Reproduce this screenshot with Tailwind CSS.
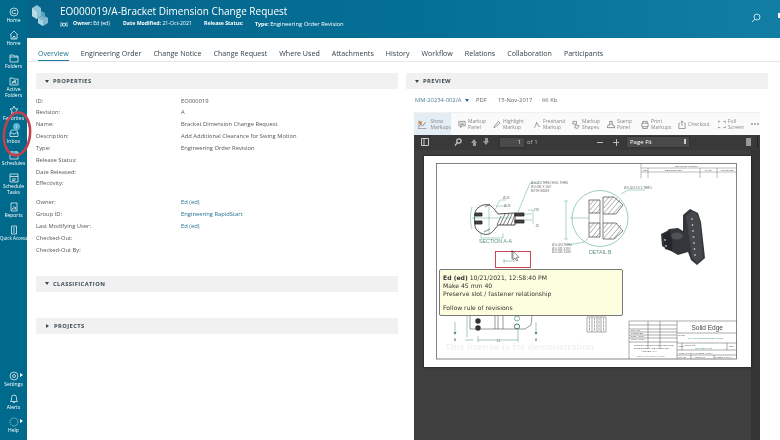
<!DOCTYPE html>
<html><head><meta charset="utf-8"><script src="https://cdn.jsdelivr.net/npm/@tailwindcss/browser@4"></script></head>
<body class="m-0">
<div class="relative w-[780px] h-[440px] overflow-hidden flex bg-white font-['Open_Sans',sans-serif] blur-[0.45px]">
<!-- sidebar -->
<aside class="w-[27px] shrink-0 bg-[#006a8c] text-white text-[5px] font-medium leading-[6px] flex flex-col justify-between text-center">
 <div class="flex flex-col pt-[7px]">
  <div class="h-[23px] flex flex-col items-center"><svg class="w-[10px] h-[10px]" viewBox="0 0 10 10" fill="none" stroke="#fff" stroke-width=".7"><circle cx="5" cy="5" r="4"/><path d="M7 3.500H4.500A1.500 1.500 0 0 0 4.500 6.500H7"/></svg><span>Home</span></div>
  <div class="h-[23px] flex flex-col items-center"><svg class="w-[10px] h-[10px]" viewBox="0 0 10 10" fill="none" stroke="#fff" stroke-width=".7"><path d="M1 5 5 1l4 4M2 4.500V9h6V4.500M4 9V6.500h2V9"/></svg><span>Home</span></div>
  <div class="h-[23px] flex flex-col items-center"><svg class="w-[10px] h-[10px]" viewBox="0 0 10 10" fill="none" stroke="#fff" stroke-width=".7"><path d="M1 2h3l1 1h4v6H1zM1 4h8"/></svg><span>Folders</span></div>
  <div class="h-[29px] flex flex-col items-center"><svg class="w-[10px] h-[10px]" viewBox="0 0 10 10" fill="none" stroke="#fff" stroke-width=".7"><path d="M1 2h3l1 1h4v6H1zM3 8l1-3 1 2 1-3 1 4"/></svg><span>Active<br>Folders</span></div>
  <div class="h-[23px] flex flex-col items-center"><svg class="w-[10px] h-[10px]" viewBox="0 0 10 10" fill="none" stroke="#fff" stroke-width=".7"><path d="m5 1 1.200 2.700 2.800.3-2.100 1.900.6 2.900L5 7.400 2.500 8.800l.6-2.900L1 4l2.800-.3z"/></svg><span>Favorites</span></div>
  <div class="relative h-[22px] flex flex-col items-center"><svg class="w-[10px] h-[10px]" viewBox="0 0 10 10" fill="none" stroke="#fff" stroke-width=".7"><path d="M1 5 2.500 2h5L9 5v3.500H1zM1 5h2.500l.5 1h2l.5-1H9"/></svg><span>Inbox</span><span class="absolute left-[13px] top-[-5px] w-[7px] h-[7px] rounded-full bg-[#5ab4d4] text-[4px] leading-[7px]">1</span></div>
  <div class="h-[23px] flex flex-col items-center"><svg class="w-[10px] h-[10px]" viewBox="0 0 10 10" fill="none" stroke="#fff" stroke-width=".7"><path d="M1 2h8v7H1zM1 4h8M3 1v2M7 1v2"/></svg><span>Schedules</span></div>
  <div class="h-[29px] flex flex-col items-center"><svg class="w-[10px] h-[10px]" viewBox="0 0 10 10" fill="none" stroke="#fff" stroke-width=".7"><path d="M1 1h8v8H1zM1 3.500h8M3 6h4M3 7.500h3"/></svg><span>Schedule<br>Tasks</span></div>
  <div class="h-[23px] flex flex-col items-center"><svg class="w-[10px] h-[10px]" viewBox="0 0 10 10" fill="none" stroke="#fff" stroke-width=".7"><path d="M2 1h6v8H2zM3.500 7.500V6M5 7.500V4M6.500 7.500V5"/></svg><span>Reports</span></div>
  <div class="h-[23px] flex flex-col items-center"><svg class="w-[10px] h-[10px]" viewBox="0 0 10 10" fill="none" stroke="#fff" stroke-width=".7"><path d="M2.500 1h5v8h-5zM4 3h2M4 5h2M4 7h2"/></svg><span class="text-[4.500px] whitespace-nowrap">Quick Access</span></div>
 </div>
 <div class="flex flex-col pb-[3px]">
  <div class="relative h-[23px] flex flex-col items-center"><svg class="w-[10px] h-[10px]" viewBox="0 0 10 10" fill="none" stroke="#fff" stroke-width=".7"><circle cx="5" cy="5" r="4"/><circle cx="5" cy="5" r="1.500"/></svg><span>Settings</span><span class="absolute left-[20px] top-[2px] border-l-[3px] border-l-white border-y-[2.500px] border-y-transparent"></span></div>
  <div class="h-[23px] flex flex-col items-center"><svg class="w-[10px] h-[10px]" viewBox="0 0 10 10" fill="none" stroke="#fff" stroke-width=".7"><path d="M1.500 7.500h7L7.500 6V3.500a2.500 2.500 0 0 0-5 0V6zM4 8.500h2"/></svg><span>Alerts</span></div>
  <div class="relative h-[20px] flex flex-col items-center"><svg class="w-[10px] h-[10px]" viewBox="0 0 10 10" fill="none" stroke="#cfe3ea" stroke-width=".7" stroke-dasharray="1.500 .7"><circle cx="5" cy="5" r="4"/></svg><span>Help</span><span class="absolute left-[20px] top-[2px] border-l-[3px] border-l-white border-y-[2.500px] border-y-transparent"></span></div>
 </div>
</aside>
<div class="flex-1 flex flex-col min-w-0">
 <!-- header -->
 <header class="relative h-[38px] shrink-0 flex bg-gradient-to-r from-[#06648a] via-[#046f96] to-[#127ea4] text-white">
  <svg class="w-[18px] h-[22px] ml-[4px] mt-[4px]" viewBox="0 0 18 22"><path d="M1 4 6 1l4 3v8l-4 3-5-3z" fill="#8fc4d6"/><path d="M6 8v7l-5-3V4z" fill="#b9dbe6"/><path d="M7 14l5-3 5 3v5l-5 3-5-3z" fill="#7db8cc"/><path d="M7 14l5 3v5l-5-3z" fill="#a8d2e0"/><path d="M10 7l4 2v5l-4-2z" fill="#5ba2bb"/></svg>
  <div class="ml-[11px] flex flex-col">
   <div class="text-[10px] leading-[12px] mt-[5px] whitespace-nowrap">EO000019/A-Bracket Dimension Change Request</div>
   <div class="flex items-center text-[5.200px] font-bold h-[8px] mt-[3px] whitespace-nowrap">
    <svg class="w-[8px] h-[7px] mr-[5px]" viewBox="0 0 8 7" fill="none" stroke="#d6edf5" stroke-width=".8"><circle cx="4" cy="3.500" r="1.500"/><path d="M1 1v5M7 1v5M2.500 2v3M5.500 2v3"/></svg>
    <span class="w-[50px]">Owner: <span class="font-normal">Ed (ed)</span></span><span class="w-[81px]">Date Modified: <span class="font-normal">21-Oct-2021</span></span><span class="w-[51px]">Release Status:</span><span>Type: <span class="font-normal text-[5.800px]">Engineering Order Revision</span></span>
   </div>
  </div>
  <svg class="absolute left-[724px] top-[13px] w-[10px] h-[10px]" viewBox="0 0 10 10" fill="none" stroke="#d9eef5" stroke-width=".9"><circle cx="6" cy="4" r="3"/><path d="M3.800 6.200 1 9"/></svg>
  <span class="absolute left-[751px] top-[13px] w-[2px] h-[5px] bg-white"></span>
 </header>
 <!-- tabs -->
 <nav class="h-[24px] shrink-0 border-b border-[#e8e8e8] pl-[11px] flex gap-[12px] text-[7.100px] leading-[10px] text-[#2f3f48] whitespace-nowrap bg-white">
  <span class="text-[#1c6f8f] border-b border-[#1c7f9f] h-[23px] pt-[10px]">Overview</span>
  <span class="pt-[10px]">Engineering Order</span><span class="pt-[10px]">Change Notice</span><span class="pt-[10px]">Change Request</span><span class="pt-[10px]">Where Used</span><span class="pt-[10px]">Attachments</span><span class="pt-[10px]">History</span><span class="pt-[10px]">Workflow</span><span class="pt-[10px]">Relations</span><span class="pt-[10px]">Collaboration</span><span class="pt-[10px]">Participants</span>
 </nav>
 <main class="flex-1 flex min-h-0 pl-[9px] pt-[11px]">
  <!-- left -->
  <section class="w-[362px] shrink-0 text-[5.800px] text-[#555]">
   <div class="h-[16px] bg-[#f1f1f1] flex items-center pl-[9px] text-[5.800px] font-bold tracking-[0.4px] text-[#3b4a52]"><span class="border-t-[3.500px] border-t-[#444] border-x-[2.500px] border-x-transparent mr-[4px]"></span>PROPERTIES</div>
   <div class="pt-[6.500px] grid grid-cols-[145px_1fr] auto-rows-[11.850px] leading-[11.850px] whitespace-nowrap">
    <span>ID:</span><span>EO000019</span>
    <span>Revision:</span><span>A</span>
    <span>Name:</span><span>Bracket Dimension Change Request</span>
    <span>Description:</span><span>Add Additional Clearance for Swing Motion</span>
    <span>Type:</span><span>Engineering Order Revision</span>
    <span>Release Status:</span><span></span>
    <span>Date Released:</span><span></span>
    <span>Effectivity:</span><span></span>
   </div>
   <div class="pt-[7px] grid grid-cols-[145px_1fr] auto-rows-[11.850px] leading-[11.850px] whitespace-nowrap">
    <span>Owner:</span><span class="text-[#1c6f8f]">Ed (ed)</span>
    <span>Group ID:</span><span class="text-[#1c6f8f]">Engineering RapidStart</span>
    <span>Last Modifying User:</span><span class="text-[#1c6f8f]">Ed (ed)</span>
    <span>Checked-Out:</span><span></span>
    <span>Checked-Out By:</span><span></span>
   </div>
   <div class="mt-[19.500px] h-[16px] bg-[#f1f1f1] flex items-center pl-[9px] font-bold tracking-[0.4px] text-[#3b4a52]"><span class="border-t-[3.500px] border-t-[#444] border-x-[2.500px] border-x-transparent mr-[4px]"></span>CLASSIFICATION</div>
   <div class="mt-[26px] h-[16px] bg-[#f1f1f1] flex items-center pl-[9px] font-bold tracking-[0.4px] text-[#3b4a52]"><span class="border-l-[3.500px] border-l-[#444] border-y-[2.500px] border-y-transparent mr-[5px] ml-px"></span>PROJECTS</div>
  </section>
  <!-- right -->
  <section class="w-[362px] ml-[8px] shrink-0 flex flex-col min-h-0">
   <div class="h-[16px] shrink-0 bg-[#f1f1f1] flex items-center pl-[9px] text-[5.800px] font-bold tracking-[0.4px] text-[#3b4a52]"><span class="border-t-[3.500px] border-t-[#444] border-x-[2.500px] border-x-transparent mr-[4px]"></span>PREVIEW</div>
   <div class="h-[23px] shrink-0 ml-[9px] flex items-center text-[5.800px] text-[#666] whitespace-nowrap">
    <span class="text-[#4f7f92] w-[48px]">MM-20234-002/A</span><span class="border-t-[3px] border-t-[#1c6f8f] border-x-[2px] border-x-transparent ml-[2px]"></span><span class="ml-[7px] w-[22px]">PDF</span><span class="w-[44px]">15-Nov-2017</span><span>66 Kb</span>
   </div>
   <div class="ml-[8px] w-[346px] h-[23px] shrink-0 flex bg-[#fafafa] text-[5px] leading-[6.300px] text-[#888] whitespace-nowrap border-t border-[#f0f0f0]">
    <div class="w-[37px] mr-[5px] bg-[#e2eef3] flex items-center pl-[4px] gap-[4px]"><svg class="w-[9px] h-[9px]" viewBox="0 0 9 9" fill="none" stroke="#666" stroke-width=".7"><path d="M0 0v9h9M1 7l2-3 2 2 3-4"/><rect x="1" y="1" width="3" height="3" fill="#e08a3c" stroke="none"/></svg><span>Show<br>Markups</span></div>
    <div class="w-[35px] flex items-center pl-[2px] gap-[2px]"><svg class="w-[8px] h-[9px]" viewBox="0 0 9 9" fill="none" stroke="#666" stroke-width=".7"><path d="M1 1h7v5H4L3 8V6H1zM2.500 3h4M2.500 4.500h4"/></svg><span>Markup<br>Panel</span></div>
    <div class="w-[40px] flex items-center pl-[2px] gap-[2px]"><svg class="w-[8px] h-[9px]" viewBox="0 0 9 9" fill="none" stroke="#666" stroke-width=".7"><path d="m1 8 1-2 4-5 2 2-5 4z"/></svg><span>Highlight<br>Markup</span></div>
    <div class="w-[39px] flex items-center pl-[2px] gap-[2px]"><svg class="w-[8px] h-[9px]" viewBox="0 0 9 9" fill="none" stroke="#666" stroke-width=".7"><path d="M1 8c2-1 2-3 3-6l2 4c1 1 2 1 2 0"/></svg><span>Freehand<br>Markup</span></div>
    <div class="w-[35px] flex items-center pl-[2px] gap-[2px]"><svg class="w-[8px] h-[9px]" viewBox="0 0 9 9" fill="none" stroke="#666" stroke-width=".7"><path d="M1 1h4v3H1zM4 5l4 1-2 3-3-1z"/></svg><span>Markup<br>Shapes</span></div>
    <div class="w-[34px] flex items-center pl-[2px] gap-[2px]"><svg class="w-[8px] h-[9px]" viewBox="0 0 9 9" fill="none" stroke="#555" stroke-width=".7"><path d="M3 1h3L5.500 5h2L9 8H0l1.500-3h2z"/></svg><span>Stamp<br>Panel</span></div>
    <div class="w-[37px] flex items-center pl-[2px] gap-[2px]"><svg class="w-[8px] h-[9px]" viewBox="0 0 9 9" fill="none" stroke="#666" stroke-width=".7"><path d="M2 3V1h5v2M1 3h7v4H1zM2 7v2h5V7"/></svg><span>Print<br>Markups</span></div>
    <div class="w-[40px] flex items-center pl-[2px] gap-[2px]"><svg class="w-[8px] h-[9px]" viewBox="0 0 9 9" fill="none" stroke="#666" stroke-width=".7"><path d="M2 3H1v6h7V3H7M4.500 6V.500M3 2 4.500.5 6 2"/></svg><span>Checkout</span></div>
    <div class="w-[34px] flex items-center pl-[2px] gap-[2px]"><svg class="w-[8px] h-[9px]" viewBox="0 0 9 9" fill="none" stroke="#666" stroke-width=".7"><path d="M0 2.500V1h2.500M6 1h2.500v1.500M0 6.500V8h2.500M6 8h2.500V6.500"/></svg><span>Full<br>Screen</span></div>
    <div class="flex-1 flex items-center gap-[1px] pl-[1px]"><span class="w-[2px] h-[2px] rounded-full bg-[#999]"></span><span class="w-[2px] h-[2px] rounded-full bg-[#999]"></span><span class="w-[2px] h-[2px] rounded-full bg-[#999]"></span></div>
   </div>
   <!-- pdf viewer -->
   <div class="ml-[8px] w-[346px] flex-1 min-h-0 flex flex-col bg-[#3f3f3f] overflow-hidden">
    <div class="relative h-[15px] shrink-0 bg-[#393939] flex items-center text-[6px] text-[#ddd] whitespace-nowrap">
     <svg class="absolute left-[7px] top-[3px] w-[8px] h-[8px]" viewBox="0 0 8 8" fill="none" stroke="#ccc"><path d="M.5.500h7v7h-7zM3 .500v7"/></svg>
     <svg class="absolute left-[40px] top-[3px] w-[8px] h-[8px]" viewBox="0 0 8 8" fill="none" stroke="#ccc" stroke-width="1.200"><circle cx="5" cy="3" r="2.200"/><path d="M3.300 4.700 1 7.500"/></svg>
     <span class="absolute left-[57px] top-[4px] border-b-[4px] border-b-[#999] border-x-[3.500px] border-x-transparent"></span><span class="absolute left-[59px] top-[8px] w-[3px] h-[3px] bg-[#999]"></span>
     <span class="absolute left-[71px] top-[3px] w-[3px] h-[3px] bg-[#999]"></span><span class="absolute left-[69px] top-[6px] border-t-[4px] border-t-[#999] border-x-[3.500px] border-x-transparent"></span>
     <span class="absolute left-[85px] top-[2px] w-[26px] h-[11px] bg-[#4a4a4a] border border-[#333] text-right pr-[3px] leading-[9px]">1</span>
     <span class="absolute left-[113px] top-[2px] leading-[11px] text-[#bbb]">of 1</span>
     <span class="absolute left-[183px] top-[7px] w-[6px] h-px bg-[#bbb]"></span>
     <span class="absolute left-[199px] top-[7px] w-[6px] h-px bg-[#bbb]"></span><span class="absolute left-[202px] top-[4px] w-px h-[7px] bg-[#bbb]"></span>
     <span class="absolute left-[212px] top-[1px] w-[64px] h-[12px] bg-[#4a4a4a] border border-[#333] rounded-[1px] pl-[3px] leading-[10px] text-white">Page Fit</span>
     <span class="absolute left-[270px] top-[4px] w-[2px] h-[5px] bg-[#ccc]"></span>
     <span class="absolute left-[332px] top-[3px] w-[5px] h-[8px] bg-[#999]"></span>
     <span class="absolute left-[343px] top-[2px] w-px h-[11px] bg-[#222]"></span>
    </div>
    <div class="relative flex-1 min-h-0">
     <span class="absolute right-0 top-0 bottom-0 w-[9px] bg-[#353535]"></span>
     <div class="relative ml-[10px] mt-[6px] w-[327px] h-[211px] bg-white shadow-[0_0_2px_#111]">
      <svg class="absolute inset-0 w-[327px] h-[211px]" viewBox="424 156 327 211" fill="none" font-family="Liberation Sans" >
       <!-- frame -->
       <rect x="436.500" y="163.500" width="300" height="195.500" stroke="#666" stroke-width=".8"/>
       <!-- revision table -->
       <g stroke="#777" stroke-width=".5"><path d="M641 163.500v15M641 168h96M641 172h96M648 168v10M700 168v10M717 168v10"/></g>
       <g fill="#555" font-size="2.500"><text x="675" y="167">REVISION HISTORY</text><text x="643" y="171">REV</text><text x="665" y="171">DESCRIPTION</text><text x="705" y="171">DATE</text><text x="720" y="171">APPROVED</text></g>
       <!-- section A-A -->
       <g stroke="#222" stroke-width=".8">
        <path d="M476 210c4-5 9-6 13-5 3 1 6 5 9 9l17 -1 0 12-17 0c-3 4-6 8-9 9-4 1-9 0-13-5-2-3-2-16 0-19z" fill="#fff"/>
        <path d="M475 213h7v3h-7zM475 221h7v3h-7zM515 213h9v3h-9zM515 220h9v3h-9z" fill="#444"/>
        <path d="M500 225l5-11M503 225l6-11M507 225l5-11M511 225l4-11M485 207l5-3M484 232l6-3M497 225l4-9" stroke-width=".6"/>
       </g>
       <g stroke="#5aa89a" stroke-width=".5">
        <path d="M489 207v26M472 218h40M481 233v5h22v-5M472 207c-2 6-2 15 0 22"/>
        <path d="M496 207l4-7h6M495 209l3-3h9"/>
        <path d="M518 212l12-29h8M528 210h5v14M524 214h8M524 220h8"/>
       </g>
       <g fill="#666" font-size="3"><text x="503" y="198.500">Ø.20</text><text x="504" y="207">Ø.24</text><text x="533" y="211">.728</text><text x="535" y="227">.25</text><text x="531" y="184">Ø.0.024 THRU SHLL THRU</text><text x="531" y="188">Ø.0.031 X 100°</text><text x="531" y="191.500">BOTH SIDES</text></g>
       <text x="479" y="243" fill="#5f8f88" font-size="5.200">SECTION A-A</text>
       <!-- detail B -->
       <circle cx="600" cy="218.500" r="28" stroke="#5aa89a" stroke-width=".6"/>
       <path d="M589 200h11v13h-11zM603 197h11l9 8-7 9h-13zM589 223h11v14h-11zM603 223h13l7 8-9 8h-11z" stroke="#222" stroke-width=".6" fill="#fff"/>
       <path d="M589 213v10M600 213v10M603 214v9" stroke="#444" stroke-width=".5"/>
       <g stroke="#444" stroke-width=".45"><path d="M590 205l4-5M590 210l8-10M592 213l8-9M596 213l4-4M604 203l5-6M604 208l9-11M604 213l13-15M608 214l12-14M613 214l8-9M590 228l4-5M590 233l8-10M592 237l8-10M596 237l4-4M604 228l4-5M604 233l9-10M604 238l13-15M609 239l12-14M614 238l7-8"/></g>
       <path d="M566 201v38M564 201h4M564 239h4M570 218h19M568 245l16-3 6-6M621 194l7-4 h17" stroke="#5aa89a" stroke-width=".5"/>
       <g fill="#666" font-size="3"><text x="552" y="246">Ø.0.024 THRU</text><text x="552" y="249.500">Ø.0.031 X 80°</text><text x="552" y="252.500">Ø.0.031 X100°</text><text x="624" y="188.500">Ø.0.024 X 0.5 THRU</text></g>
       <text x="589" y="254" fill="#5f8f88" font-size="5.200">DETAIL B</text>
       <!-- 3D bracket -->
       <path d="M683 215l7-6 8 4 3 9 4 36-8 7-6-5-3-8-10 3-16-9-1-12 6-3 2-2 9-1 5 3z" fill="#33363a"/>
       <path d="M686 216l6-5 5 3 3 8 3 36-6 5-5-6z" fill="#44474b"/>
       <path d="M663 234l6-3c3 4 4 14 3 20l-7-2z" fill="#25272a"/>
       <ellipse cx="677" cy="236" rx="6" ry="3.500" fill="#505356"/>
       <g fill="#b5b8bb"><circle cx="692" cy="219" r=".9"/><circle cx="692.500" cy="225" r=".9"/><circle cx="693" cy="231" r=".9"/><circle cx="693.500" cy="237" r=".9"/><circle cx="694" cy="243" r=".9"/><circle cx="694.500" cy="249" r=".9"/><circle cx="695" cy="255" r=".9"/><circle cx="665" cy="240" r=".9"/><circle cx="666" cy="246" r=".9"/></g>
       <!-- front view below tooltip -->
       <g stroke="#333" stroke-width=".5"><path d="M470 315v14h55l6-4 1-10M495 315v14M498 315v14M503 315v14"/></g>
       <circle cx="478" cy="321" r="2.700" fill="#333"/><circle cx="478" cy="328" r="2.700" fill="#333"/><circle cx="517" cy="318.500" r="2.500" stroke="#3d8f7f" stroke-width=".7"/><circle cx="517" cy="326.500" r="2.500" stroke="#27695f" stroke-width=".9"/>
       <g stroke="#4a8f82" stroke-width=".5"><path d="M455 322v12M536 322v12M467 315v22M478 340h40M478 336v6M518 330v12M465 340h8"/></g>
       <path d="M453.500 332h3l-1.500 3zM534.500 332h3l-1.500 3z" fill="#4a8f82"/>
       <g fill="#666" font-size="3"><text x="454" y="341">A</text><text x="535" y="341">A</text><text x="496" y="341.500">.51</text></g>
       <path d="M587 317h19v15h-19zM597 317v15M592 317v15M601 317v15" stroke="#555" stroke-width=".5"/>
       <g stroke="#777" stroke-width=".9" stroke-dasharray=".8 .6"><path d="M589.500 318v13M594.500 318v13M599 318v13M603.500 318v13"/></g>
       <text x="445" y="350" fill="#f2f2f2" font-size="9.500" font-weight="bold">This license is for demonstration</text>
       <!-- title block -->
       <g stroke="#555" stroke-width=".5">
        <path d="M629 321h108M629 321v38M677 321v38M648 321v28M660 321v28M629 325h48M629 329h48M629 332h48M629 335h48M629 338h48M629 342h48M677 333h60M677 343h60M677 350h60M677 355h60M682 343v7M727 343v7M691 355v4M714 355v4"/>
       </g>
       <text x="691.500" y="329.500" fill="#444" font-size="6.500">Solid Edge</text>
       <g fill="#555" font-size="2.500"><text x="631" y="331">DRAWN</text><text x="631" y="334">CHECKED</text><text x="631" y="337">ENG APPR</text><text x="631" y="340">MGR APPR</text><text x="634" y="346">UNLESS OTHERWISE SPECIFIED</text><text x="634" y="349">DIMENSIONS ARE IN INCHES</text><text x="641" y="352">ANGLES ±XX°</text><text x="637" y="356.500">2 PL ±X.XX 3 PL ±X.XXX</text><text x="688" y="338.500" fill="#3d8f7f">CLAMP MOUNTING BRACKET</text><text x="678" y="336">TITLE</text><text x="678" y="347">SIZE</text><text x="685" y="346">DWG NO</text><text x="695" y="349" fill="#3d8f7f">MM-20234-002</text><text x="729" y="347">REV</text><text x="679" y="353.500">FILE NAME: MM-20234-002-A</text><text x="678" y="358">SCALE</text><text x="695" y="358">WEIGHT</text><text x="715" y="358">SHEET 1 OF 1</text></g>
       <!-- red markup -->
       <rect x="495.500" y="251.500" width="35" height="16" stroke="#c8323c" stroke-width=".9"/>
       <path d="M512 250v9" stroke="#333" stroke-width=".6"/>
       <path d="M504 261h11M504 259v4" stroke="#4a8f82" stroke-width=".5"/>
       <path d="M513 251v9l2-2 1.500 3 1.200-.6-1.500-3H519z" fill="#fff" stroke="#222" stroke-width=".5"/>
      </svg>
      <!-- tooltip -->
      <div class="absolute left-[15px] top-[113px] w-[184px] h-[47px] bg-[#fdfddf] border border-[#777] rounded-[2px] pl-[3px] pt-[4.500px] font-['DejaVu_Sans',sans-serif] text-[6.100px] leading-[8.400px] text-[#333] whitespace-nowrap [text-rendering:geometricPrecision]">
       <div><span class="font-bold">Ed (ed)</span> 10/21/2021, 12:58:40 PM</div>
       <div>Make 45 mm 40</div>
       <div>Preserve slot / fastener relationship</div>
       <div class="h-[5.500px]"></div>
       <div>Follow rule of revisions</div>
      </div>
     </div>
    </div>
   </div>
  </section>
 </main>
</div>
<!-- red annotation -->
<svg class="absolute left-0 top-[105px] w-[40px] h-[58px] pointer-events-none" viewBox="0 0 40 58" fill="none"><ellipse cx="17" cy="29" rx="13" ry="21.500" stroke="#c4404f" stroke-width="2.600" transform="rotate(6 17 29)"/></svg>
</div>
</body></html>
